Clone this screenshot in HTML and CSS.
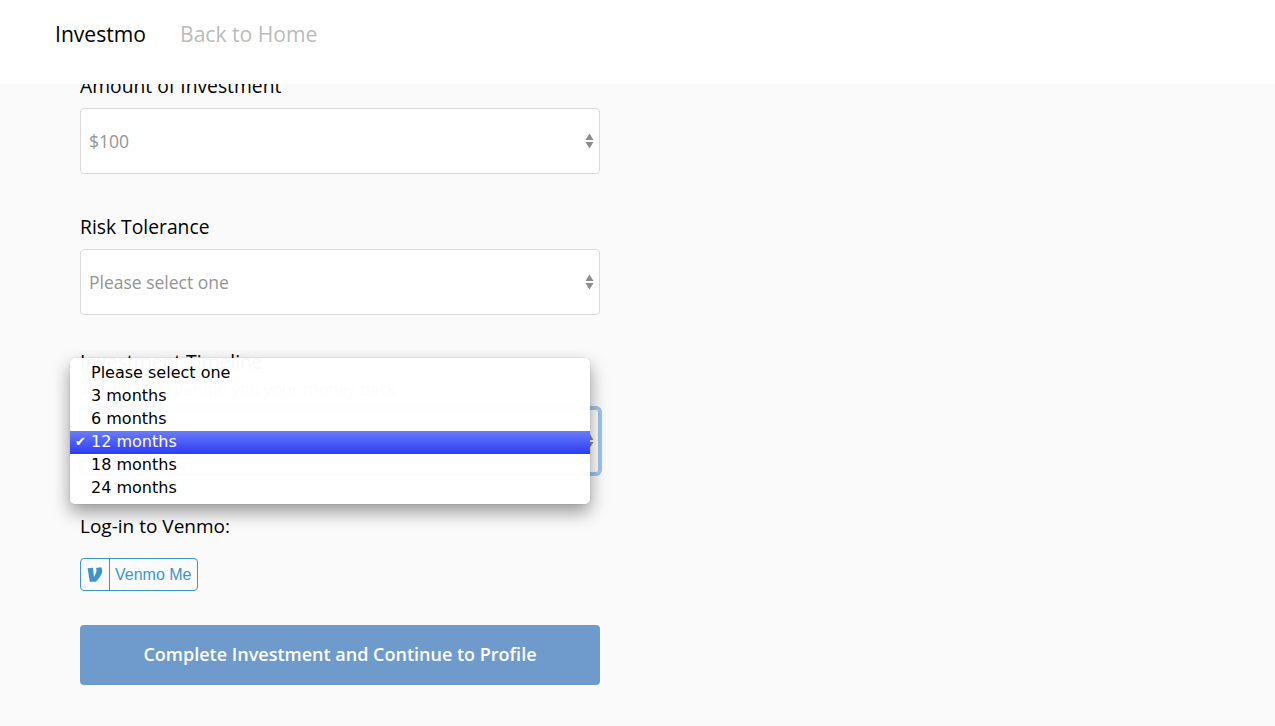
FILE: index.html
```html
<!DOCTYPE html>
<html lang="en">
<head>
    <meta charset="UTF-8">
    <meta name="viewport" content="width=device-width, initial-scale=1.0">
    <title>Investmo</title>
    <link rel="stylesheet" href="styles.css">
</head>
<body>
    <nav class="navbar">
        <a class="brand" href="#">Investmo</a>
        <a class="nav-link" href="#">Back to Home</a>
    </nav>

    <form class="invest-form">
        <div class="field">
            <label class="field-label">Amount of Investment</label>
            <div class="select-box">
                <span class="select-value">$100</span>
                <svg class="select-arrows" width="9" height="16" viewBox="0 0 9 16"><path d="M4.500 0.500L8.500 7H0.500zM0.500 9H8.500L4.500 15.500z"/></svg>
            </div>
        </div>

        <div class="field">
            <label class="field-label">Risk Tolerance</label>
            <div class="select-box">
                <span class="select-value">Please select one</span>
                <svg class="select-arrows" width="9" height="16" viewBox="0 0 9 16"><path d="M4.500 0.500L8.500 7H0.500zM0.500 9H8.500L4.500 15.500z"/></svg>
            </div>
        </div>

        <div class="field field-open">
            <label class="field-label">Investment Timeline</label>
            <p class="field-hint">Then... we'll Venmo you your money back</p>
            <div class="select-box select-focus">
                <span class="select-value">12 months</span>
                <svg class="select-arrows" width="9" height="16" viewBox="0 0 9 16"><path d="M4.500 0.500L8.500 7H0.500zM0.500 9H8.500L4.500 15.500z"/></svg>
            </div>

            <!-- Native looking popup menu -->
            <ul class="select-menu">
                <li>Please select one</li>
                <li>3 months</li>
                <li>6 months</li>
                <li class="selected"><span class="check">✔</span>12 months</li>
                <li>18 months</li>
                <li>24 months</li>
            </ul>
        </div>

        <div class="venmo-field">
            <label class="field-label">Log-in to Venmo:</label>
            <a class="venmo-btn" href="#">
                <span class="venmo-icon">
                    <svg width="16" height="15" viewBox="0 0 16 15"><path d="M14.200 0.300C14.800 1.300 15.200 2.300 15.200 3.600C15.200 7.600 11.800 12 8.900 14.700H2.800L0.600 1.200L5.900 0.700L7 10C8.200 8.200 9.500 5.300 9.500 3.300C9.500 2.200 9.300 1.500 9 0.900z"/></svg>
                </span>
                <span class="venmo-text">Venmo Me</span>
            </a>
        </div>

        <button class="submit-btn" type="button">Complete Investment and Continue to Profile</button>
    </form>
</body>
</html>
```

FILE: styles.css
```css
html, body {
    height: 100%;
}
body {
    font-family: "Open Sans", sans-serif;
    background-color: #fafafa;
    margin: 0;
    overflow: hidden;
    color: #000;
}
.navbar {
    position: absolute;
    top: 0;
    left: 0;
    right: 0;
    height: 84px;
    box-sizing: border-box;
    padding: 0 0 17px 55px;
    background-color: #fff;
    display: flex;
    align-items: center;
    gap: 34px;
    font-size: 21.1px;
    z-index: 2;
}
.navbar a {
    text-decoration: none;
}
.brand {
    color: #000;
}
.nav-link {
    color: #bbb;
}
.invest-form {
    width: 520px;
    margin-left: 80px;
    padding-top: 72px;
}
.field {
    position: relative;
    margin-bottom: 39px;
}
.field-open {
    margin-top: -6px;
    margin-bottom: 38px;
}
.field-label {
    display: block;
    font-size: 19.3px;
    line-height: 28px;
    margin-bottom: 8px;
}
.field-hint {
    margin: -4px 0 10px;
    font-size: 16.4px;
    line-height: 18px;
    color: #888;
}
.select-box {
    box-sizing: border-box;
    height: 66px;
    background-color: #fff;
    border: 1px solid #d9d9d9;
    border-radius: 4px;
    display: flex;
    align-items: center;
    justify-content: space-between;
    padding: 0 5px 0 8px;
}
.select-value {
    font-size: 17.5px;
    color: #949494;
}
.select-arrows {
    fill: #8c8c8c;
}
.select-focus {
    border-color: #9ec5e8;
    box-shadow: 0 0 0 2px #9ec5e8, inset 0 0 0 1px #9ec5e8;
}
.select-menu {
    position: absolute;
    top: 10px;
    left: -10px;
    width: 520px;
    box-sizing: border-box;
    margin: 0;
    padding: 4px 0;
    list-style: none;
    background-color: rgba(255, 255, 255, 0.97);
    border-radius: 5px;
    box-shadow: 0 0 1px rgba(0, 0, 0, 0.4), 0 8px 18px rgba(0, 0, 0, 0.4);
    font-family: "DejaVu Sans", sans-serif;
    font-size: 16px;
}
.select-menu li {
    position: relative;
    height: 23px;
    line-height: 21px;
    padding-left: 21px;
}
.select-menu .selected {
    color: #fff;
    background: linear-gradient(#6a7cf9, #2c3cf4);
}
.check {
    position: absolute;
    left: 5px;
    font-size: 13px;
}
.venmo-field {
    display: flow-root;
    margin-bottom: 34px;
}
.venmo-field .field-label {
    font-size: 19px;
    margin-bottom: 18px;
}
.venmo-btn {
    box-sizing: border-box;
    display: inline-flex;
    width: 118px;
    height: 33px;
    border: 1px solid #3d95ce;
    border-radius: 4px;
    vertical-align: top;
    text-decoration: none;
    color: #3d95ce;
    font-family: "Liberation Sans", sans-serif;
    font-size: 16px;
}
.venmo-icon {
    width: 28px;
    border-right: 1px solid #3d95ce;
    display: flex;
    align-items: center;
    justify-content: center;
}
.venmo-icon svg {
    fill: #3d95ce;
}
.venmo-text {
    line-height: 31px;
    padding-left: 5px;
}
.submit-btn {
    display: block;
    width: 520px;
    height: 60px;
    padding: 0 0 2px;
    border: none;
    border-radius: 4px;
    background-color: #6f9bcc;
    color: #fff;
    font-family: "Open Sans", sans-serif;
    font-size: 18px;
    font-weight: 600;
}
```
